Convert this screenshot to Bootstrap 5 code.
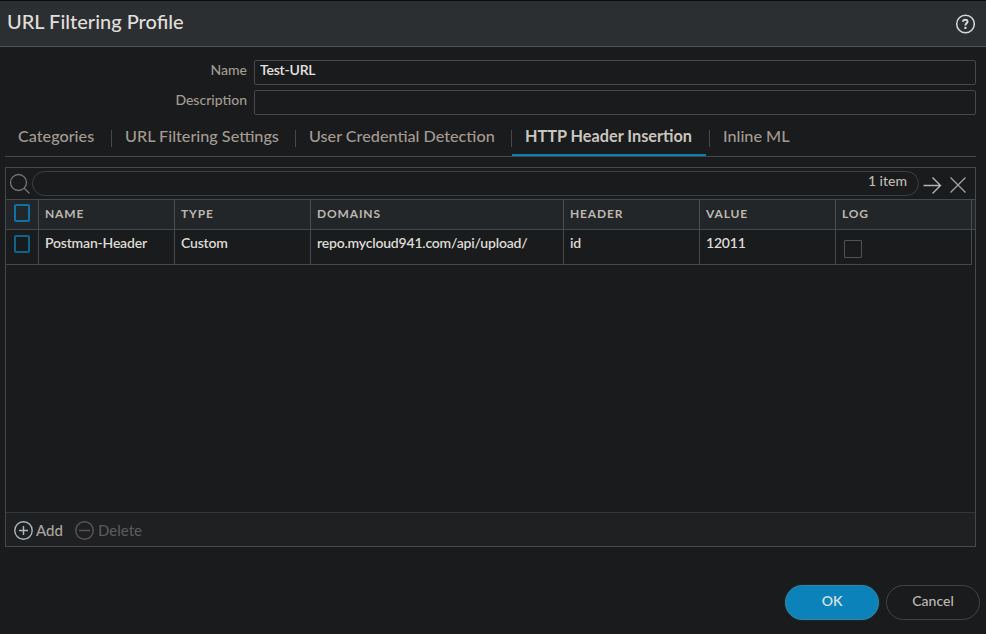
<!DOCTYPE html>
<html lang="en">
<head>
<meta charset="utf-8">
<meta name="viewport" content="width=device-width, initial-scale=1">
<title>URL Filtering Profile</title>
<link href="https://cdn.jsdelivr.net/npm/bootstrap@5.3.0/dist/css/bootstrap.min.css" rel="stylesheet">
<style>
:root{--line:#46494b;--ink:#dedbd6;--muted:#a39b91}
body{font-family:Lato,"Liberation Sans",sans-serif;font-size:14px;line-height:20px;background:#1a1b1d;color:var(--ink);height:634px;overflow:hidden;border-top:1px solid #0b0c0d}
svg{display:block;flex:none;fill:none}
.dlg-head{height:46px;background:#2c2f32;border-bottom:1px solid #4a5356;padding:0 11px 5px 7px}
.dlg-head h1{font-size:20px;line-height:24px;font-weight:500;color:#e0dfdb}
.dlg-head svg{margin-top:5px}
.fields{padding:13px 10px 0 0}
.fields label{width:254px;padding-right:7px;height:25px;color:var(--muted);font-weight:500}
.fields .form-control{height:25px;padding:0 5px 6px;font-size:14px;background:transparent;border:1px solid var(--line);border-radius:2px;color:#e6e4e0;font-weight:600;letter-spacing:-.2px;box-shadow:none}
.fr1{margin-bottom:5px}
.tabs{margin:0 10px 0 5px;height:42px;border-bottom:1px solid var(--line);font-size:16.2px}
.tabs .nav-link{padding:11px 13px 0;height:41px;line-height:20px;color:var(--muted);font-weight:500;white-space:nowrap;border-bottom:2px solid transparent}
.tabs .nav-item{position:relative}
.tabs .nav-item+.nav-item::before{content:"";position:absolute;left:-1px;top:15px;height:17px;width:1px;background:var(--line)}
.tabs .nav-link.active{color:#c9c5bf;font-size:16.25px;font-weight:700;border-bottom-color:#0a7fb0}
.t1{width:107px}.t2{width:184px}.t3{width:216px}.t4{width:194px}
.t4+.nav-item{margin-left:4px}
.grid-panel{margin:10px 10px 0 5px;height:380px;border:1px solid var(--line)}
.finder{height:31px;padding:3px 8px 3px 3px}
.finder svg{position:relative;top:1px}
.finder .glass{top:0}
.pill{height:25px;width:887px;border:1px solid #3c3f41;border-radius:13px;padding:0 11px 5px;margin-left:2px;color:#bfbab3;font-weight:500}
.records{table-layout:fixed;width:966px;border-collapse:separate;border-spacing:0}
.records th{height:29px;padding:0 6px 2px;font-size:12px;font-weight:700;letter-spacing:.85px;color:#bdb8b0;border-right:1px solid #4a4e50;line-height:20px}
.records td{height:35px;padding:3px 6px 0;vertical-align:top;font-weight:600;letter-spacing:-.2px;border-right:1px solid var(--line);border-bottom:1px solid var(--line)}
.records .sel{padding-left:8px}
.records td.sel{padding-top:5px}
.thead-strip{background:#232628;border-top:1px solid var(--line);border-bottom:1px solid var(--line);height:31px}
.box{display:block;width:16px;height:18px;border:2px solid #0e73a2;border-radius:2px;background:#20282c}
.records th .box{margin-top:-2px}
.row-box{border-color:#11638a;background:#151b1e}
.log-box{width:18px;height:18px;border:1px solid #505254;background:transparent;margin:7px 0 0 2px;border-radius:1px}
.grid-foot{height:34px;border-top:1px solid #343638;background:#1e2022;padding-left:8px;font-size:15px;font-weight:500}
.grid-foot svg{margin-right:3px;margin-top:1px}
.act{color:#aaa69f}.act.off{color:#5a5a59;margin-left:12px}
.acts{padding:38px 6px 0;gap:7px}
.pillbtn{width:94px;height:35px;border-radius:18px;padding:0 0 3px;font-size:14px;line-height:20px;font-weight:500;border:1px solid #414446;color:#bfbab3}
.pillbtn.ok{background:#0b83ba;border-color:#467f96;color:#d7e1e5;font-weight:600;box-shadow:0 0 2px #07516f}
</style>
</head>
<body>
<header class="dlg-head d-flex align-items-center justify-content-between">
<h1 class="m-0">URL Filtering Profile</h1>
<svg width="20" height="20" viewBox="0 0 20 20" stroke="#d8d8d8"><circle cx="10.5" cy="10" r="8.8" stroke-width="1.5"/><path d="M8 7.700C8.100 5.100 12.600 5 12.500 7.600C12.400 9.200 10.400 9.400 10.400 11.400" stroke-width="2"/><path d="M10.400 12.800V15" stroke-width="2.100"/></svg>
</header>
<form class="fields">
<div class="d-flex fr1"><label class="text-end" for="pname">Name</label><input class="form-control flex-fill w-auto" id="pname" value="Test-URL"></div>
<div class="d-flex"><label class="text-end" for="pdesc">Description</label><input class="form-control flex-fill w-auto" id="pdesc"></div>
</form>
<ul class="nav flex-nowrap tabs">
<li class="nav-item t1"><a class="nav-link">Categories</a></li>
<li class="nav-item t2"><a class="nav-link">URL Filtering Settings</a></li>
<li class="nav-item t3"><a class="nav-link">User Credential Detection</a></li>
<li class="nav-item t4"><a class="nav-link active">HTTP Header Insertion</a></li>
<li class="nav-item"><a class="nav-link">Inline ML</a></li>
</ul>
<main class="grid-panel d-flex flex-column">
<div class="finder d-flex align-items-center">
<svg class="glass" width="21" height="22" viewBox="0 0 21 22" stroke="#73787c" stroke-width="1.3"><circle cx="9.5" cy="9.5" r="8"/><path d="M15 15L20.500 20.500"/></svg>
<div class="pill d-flex align-items-center justify-content-end">1 item</div>
<svg class="ms-1" width="19" height="18" viewBox="0 0 19 18" stroke="#b4b4b4" stroke-width="1.4"><path d="M0.500 9.500H17.500M9.500 1.500L17.500 9.500L9.500 17.500"/></svg>
<svg class="ms-2" width="17" height="18" viewBox="0 0 17 18" stroke="#a4a4a2" stroke-width="1.3"><path d="M0.500 1.500L15.500 16.500M15.500 1.500L0.500 16.500"/></svg>
</div>
<div class="thead-strip">
<table class="records"><colgroup><col style="width:33px"><col style="width:136px"><col style="width:136px"><col style="width:253px"><col style="width:136px"><col style="width:136px"><col style="width:136px"></colgroup>
<tr><th class="sel"><span class="box"></span></th><th>NAME</th><th>TYPE</th><th>DOMAINS</th><th>HEADER</th><th>VALUE</th><th>LOG</th></tr></table>
</div>
<div class="flex-fill">
<table class="records"><colgroup><col style="width:33px"><col style="width:136px"><col style="width:136px"><col style="width:253px"><col style="width:136px"><col style="width:136px"><col style="width:136px"></colgroup>
<tr><td class="sel"><span class="box row-box"></span></td><td>Postman-Header</td><td>Custom</td><td>repo.mycloud941.com/api/upload/</td><td>id</td><td>12011</td><td><span class="box log-box"></span></td></tr></table>
</div>
<div class="grid-foot d-flex align-items-center">
<span class="act d-flex align-items-center"><svg width="19" height="19" viewBox="0 0 19 19" stroke="#aeb7bd" stroke-width="1.4"><circle cx="9.5" cy="9.5" r="8.7"/><path d="M5 9.5H14M9.5 5V14"/></svg>Add</span>
<span class="act off d-flex align-items-center"><svg class="me-1" width="19" height="19" viewBox="0 0 19 19" stroke="#5b5653" stroke-width="1.4"><circle cx="9.5" cy="9.5" r="8.7"/><path d="M4 9.5H15"/></svg>Delete</span>
</div>
</main>
<footer class="acts d-flex justify-content-end">
<button class="btn pillbtn ok">OK</button>
<button class="btn pillbtn">Cancel</button>
</footer>
<script src="https://cdn.jsdelivr.net/npm/bootstrap@5.3.0/dist/js/bootstrap.bundle.min.js"></script>
</body>
</html>
